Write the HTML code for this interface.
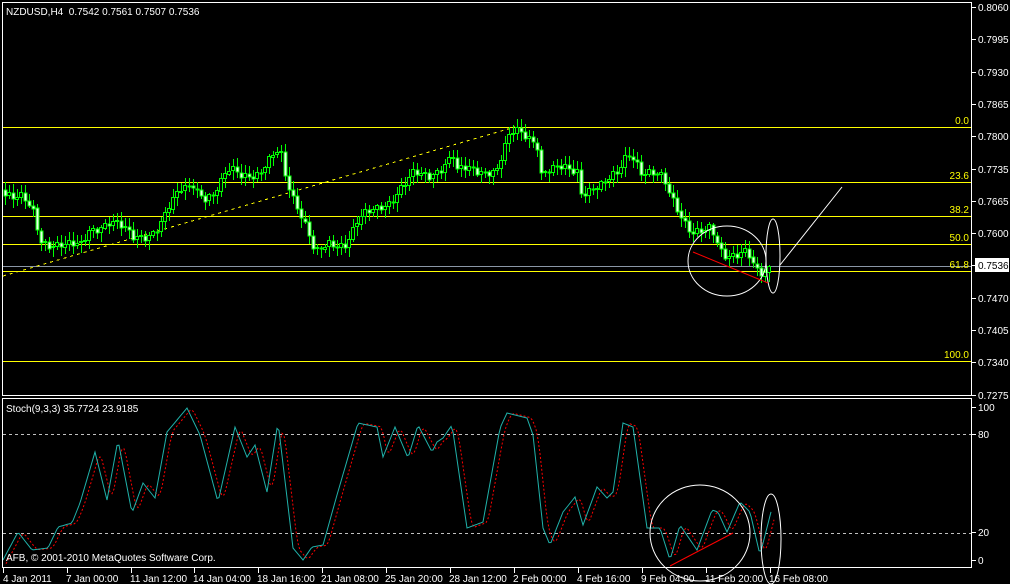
<!DOCTYPE html>
<html><head><meta charset="utf-8">
<style>
html,body{margin:0;padding:0;background:#000;width:1010px;height:584px;overflow:hidden}
svg{display:block}
text{font-family:"Liberation Sans",sans-serif;font-size:10px;fill:#fff}
</style></head><body>
<svg id="s" width="1010" height="584" viewBox="0 0 1010 584" xmlns="http://www.w3.org/2000/svg" shape-rendering="crispEdges">
<rect width="1010" height="584" fill="#000"/>
<g stroke="#ffff00" stroke-width="1">
<line x1="3" y1="127.5" x2="972" y2="127.5"/>
<line x1="3" y1="182.5" x2="972" y2="182.5"/>
<line x1="3" y1="216.5" x2="972" y2="216.5"/>
<line x1="3" y1="244.5" x2="972" y2="244.5"/>
<line x1="3" y1="271.5" x2="972" y2="271.5"/>
<line x1="3" y1="361.5" x2="972" y2="361.5"/>
</g>
<line x1="3" y1="266.5" x2="972" y2="266.5" stroke="#8a96a6"/>
<g>
<text x="969" y="124" text-anchor="end" style="fill:#ff0">0.0</text>
<text x="969" y="179" text-anchor="end" style="fill:#ff0">23.6</text>
<text x="969" y="213" text-anchor="end" style="fill:#ff0">38.2</text>
<text x="969" y="241" text-anchor="end" style="fill:#ff0">50.0</text>
<text x="969" y="268" text-anchor="end" style="fill:#ff0">61.8</text>
<text x="969" y="358" text-anchor="end" style="fill:#ff0">100.0</text>
</g>
<line x1="3" y1="276" x2="515" y2="127" stroke="#ffff00" stroke-dasharray="3,4"/>
<g id="candles"></g>
<line x1="3" y1="434.5" x2="972" y2="434.5" stroke="#c0c0c0" stroke-dasharray="3,3"/>
<line x1="3" y1="533.5" x2="972" y2="533.5" stroke="#c0c0c0" stroke-dasharray="3,3"/>
<polyline id="sig" fill="none" stroke="#ff0000" stroke-dasharray="2,2" shape-rendering="auto"/>
<polyline id="stk" fill="none" stroke="#20b2aa" shape-rendering="auto"/>
<g fill="none" stroke="#fff" shape-rendering="auto">
<line x1="780" y1="265" x2="842" y2="187"/>
<ellipse cx="727" cy="261" rx="39" ry="35"/>
<ellipse cx="773" cy="256" rx="7" ry="37"/>
<ellipse cx="700" cy="533" rx="50" ry="48"/>
<ellipse cx="771" cy="539" rx="10" ry="45"/>
</g>
<g stroke="#ff0000" shape-rendering="auto">
<line x1="693" y1="252" x2="768" y2="283"/>
<line x1="670" y1="566" x2="733" y2="533"/>
</g>
<g stroke="#fff" fill="none">
<rect x="2.5" y="2.5" width="969" height="393"/>
<rect x="2.5" y="398.5" width="969" height="169"/>
</g>
<g id="pax"></g>
<rect x="975" y="258" width="34" height="14" fill="#fff"/>
<text x="978" y="269" style="fill:#000">0.7536</text>
<g stroke="#fff"><line x1="972" y1="407.5" x2="976" y2="407.5"/><line x1="972" y1="434.5" x2="976" y2="434.5"/><line x1="972" y1="532.5" x2="976" y2="532.5"/><line x1="972" y1="560.5" x2="976" y2="560.5"/></g>
<text x="978" y="411">100</text><text x="978" y="438">80</text><text x="978" y="536">20</text><text x="978" y="564">0</text>
<text x="6" y="15">NZDUSD,H4&#160;&#160;0.7542 0.7561 0.7507 0.7536</text>
<text x="6" y="412">Stoch(9,3,3) 35.7724 23.9185</text>
<text x="6" y="561">AFB, © 2001-2010 MetaQuotes Software Corp.</text>
<g id="tax"></g>
</svg>
<script>
(function(){
var NS="http://www.w3.org/2000/svg";
function el(t,a,p,txt){var e=document.createElementNS(NS,t);for(var k in a)e.setAttribute(k,a[k]);if(txt)e.textContent=txt;(p||document.getElementById('s')).appendChild(e);return e;}
var pl=["0.8060","0.7995","0.7930","0.7865","0.7800","0.7735","0.7665","0.7600","","0.7470","0.7405","0.7340","0.7275"];
var pax=document.getElementById('pax');
for(var i=0;i<pl.length;i++){var yy=Math.round(7+i*32.3);el('line',{x1:972,y1:yy+.5,x2:976,y2:yy+.5,stroke:'#fff'},pax);if(pl[i])el('text',{x:978,y:yy+4},pax,pl[i]);}
var tl=[[3,"4 Jan 2011"],[67,"7 Jan 00:00"],[131,"11 Jan 12:00"],[194,"14 Jan 04:00"],[258,"18 Jan 16:00"],[322,"21 Jan 08:00"],[386,"25 Jan 20:00"],[450,"28 Jan 12:00"],[514,"2 Feb 00:00"],[578,"4 Feb 16:00"],[642,"9 Feb 04:00"],[706,"11 Feb 20:00"],[770,"16 Feb 08:00"]];
var tax=document.getElementById('tax');
tl.forEach(function(t){el('line',{x1:t[0]+.5,y1:568,x2:t[0]+.5,y2:573,stroke:'#fff'},tax);el('text',{x:t[0]+(t[0]==3?0:-1),y:582},tax,t[1]);});
var P=[[3,190],[13,198],[23,200],[33,213],[40,240],[67,247],[83,247],[87,230],[110,222],[133,237],[150,233],[160,227],[180,190],[193,182],[203,197],[213,200],[230,168],[260,177],[280,148],[283,167],[292,193],[307,230],[315,257],[330,243],[345,243],[360,220],[390,200],[413,177],[430,175],[453,157],[457,173],[473,170],[497,170],[507,143],[515,132],[530,137],[539,145],[540,172],[563,170],[577,170],[580,190],[603,187],[617,175],[627,152],[635,155],[640,172],[663,180],[672,197],[683,217],[692,233],[707,235],[710,230],[723,253],[747,253],[755,273],[763,277],[772,263]];
function interp(A,x){for(var i=1;i<A.length;i++){if(x<=A[i][0]){var a=A[i-1],b=A[i];var t=(x-a[0])/(b[0]-a[0]||1);return a[1]+t*(b[1]-a[1]);}}return A[A.length-1][1];}
var g=document.getElementById('candles');
var prev=interp(P,3);
for(var x=5;x<=772;x+=4){
 var c=interp(P,x)+Math.sin(x*1.7)*4+Math.sin(x*0.53)*3;
 var o=prev;prev=c;
 var bt=Math.min(o,c),bb=Math.max(o,c);
 var hi=bt-2-Math.abs(Math.sin(x*2.3))*7,lo=bb+2+Math.abs(Math.cos(x*1.9))*7;
 el('line',{x1:x+.5,y1:hi.toFixed(0),x2:x+.5,y2:lo.toFixed(0),stroke:'#00ff00'},g);
 var h=Math.max(bb-bt,1);
 if(c>o){el('rect',{x:x-1,y:bt.toFixed(0),width:3,height:h.toFixed(0),fill:'#e8ffe8',stroke:'#00ff00'},g);}
 else{el('rect',{x:x-1.5,y:bt.toFixed(0)-0.5,width:3,height:h.toFixed(0),fill:'#000',stroke:'#00ff00'},g);}
}
var S=[[3,560],[18,532],[32,550],[48,548],[58,527],[72,523],[80,503],[95,452],[107,500],[118,440],[132,513],[143,483],[155,498],[167,432],[187,408],[200,435],[218,502],[235,427],[247,457],[255,445],[267,492],[278,422],[293,548],[303,560],[312,547],[323,545],[337,495],[358,423],[377,427],[383,457],[395,427],[408,458],[418,425],[432,452],[437,442],[443,438],[452,425],[467,528],[483,522],[500,428],[507,413],[527,418],[533,435],[543,528],[550,545],[563,512],[575,497],[583,525],[597,487],[607,498],[613,492],[623,423],[633,427],[647,528],[660,528],[670,560],[680,525],[697,550],[712,510],[718,512],[727,532],[740,502],[750,512],[760,555],[772,508]];
var A1=[],B1=[];
for(var x2=3;x2<=772;x2+=2){A1.push(x2+','+interp(S,x2).toFixed(1));}
for(var x3=6;x3<=775;x3+=2){var yv=(interp(S,x3-3)+interp(S,x3-5)+interp(S,x3-7))/3;B1.push(x3+','+yv.toFixed(1));}
document.getElementById('stk').setAttribute('points',A1.join(' '));
document.getElementById('sig').setAttribute('points',B1.join(' '));
})();
</script>
</body></html>
